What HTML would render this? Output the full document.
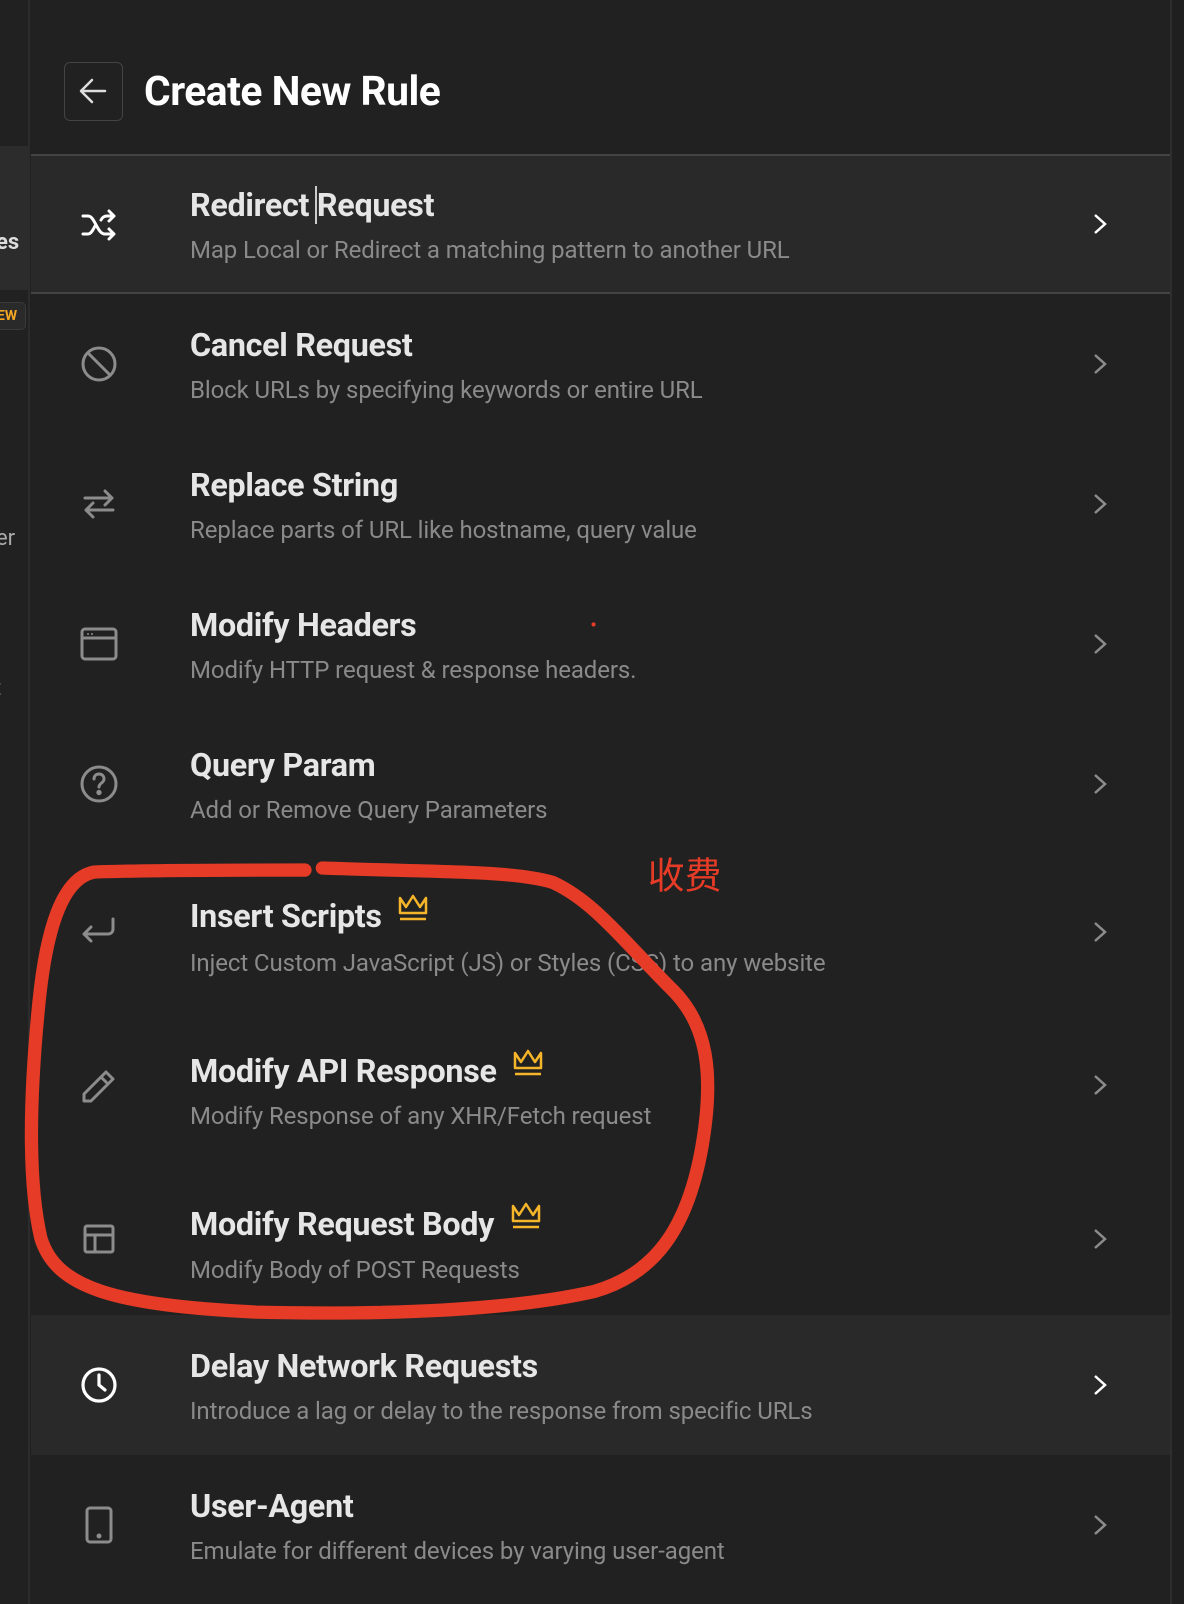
<!DOCTYPE html>
<html><head><meta charset="utf-8"><style>
*{margin:0;padding:0;box-sizing:border-box}
body{width:1184px;height:1604px;background:#212121;font-family:"Roboto","Liberation Sans","Noto Sans CJK SC",sans-serif;position:relative;overflow:hidden}
.side{position:absolute;left:0;top:0;width:30px;height:1604px;background:#212121;border-right:2px solid #2c2c2c}
.rstrip{position:absolute;left:1170px;top:0;width:14px;height:1604px;background:#1f1f1f;border-left:2px solid #2e2e2e}
.row{position:absolute;left:31px;width:1139px}
.row.hl{background:#292929}
.t{position:absolute;left:159px;font-size:32.3px;font-weight:bold;color:#e6e6e6;white-space:nowrap;letter-spacing:-0.3px}
.s{position:absolute;left:159px;font-size:24px;color:#8a8a8a;white-space:nowrap;letter-spacing:-0.1px}
.ic{position:absolute;left:48px;width:40px;height:40px}
.ch{position:absolute;left:1058px;width:24px;height:24px}
</style></head><body>
<div class="side">
 <div style="position:absolute;left:0;top:146px;width:28px;height:144px;background:#2c2c2c"></div>
 <div style="position:absolute;left:-4px;top:230px;font-size:22px;font-weight:bold;color:#ddd">es</div>
 <div style="position:absolute;left:-12px;top:302px;width:38px;height:28px;border:1px solid #3a3a3a;border-radius:5px;background:#2a2a2a;color:#f5a623;font-size:14px;font-weight:bold;line-height:26px;padding-left:8px">EW</div>
 <div style="position:absolute;left:-4px;top:526px;font-size:22px;color:#aaa">er</div>
 <div style="position:absolute;left:-6px;top:676px;font-size:22px;color:#999">t</div>
</div>
<div class="rstrip"></div>
<div style="position:absolute;left:64px;top:62px;width:59px;height:59px;border:1.5px solid #444;border-radius:6px">
<svg width="56" height="56" viewBox="0 0 56 56" style="position:absolute;left:0;top:0"><path d="M40 28H17M27 17L16 28l11 11" stroke="#ddd" stroke-width="2.5" fill="none" stroke-linecap="round" stroke-linejoin="round"/></svg></div>
<div style="position:absolute;left:144px;top:67px;font-size:40.8px;font-weight:bold;color:#fff;letter-spacing:-0.5px">Create New Rule</div>
<div style="position:absolute;left:31px;top:154px;width:1139px;height:2px;background:#444"></div>

<div class="row hl" style="top:156px;height:138px;border-bottom:2px solid #444">
 <svg class="ic" style="top:49px" viewBox="0 0 40 40" fill="none" stroke="#fff" stroke-width="3" stroke-linecap="round" stroke-linejoin="round"><path d="M4 11h5c7 0 9 18 17 18h8M4 29h5c3 0 5-4 7-8M22 15c1-2 3-4 6-4h6M30 6l5 5-5 5M30 24l5 5-5 5"/></svg>
 <div class="t" style="top:30px">Redirect <span style="border-left:2px solid #ccc;margin-left:-2px"></span>Request</div>
 <div class="s" style="top:80px">Map Local or Redirect a matching pattern to another URL</div>
 <svg class="ch" style="top:56px" viewBox="0 0 24 24" fill="none" stroke="#fff" stroke-width="2.5"><path d="M6 3l10 9-10 9"/></svg>
</div>

<div class="row" style="top:294px;height:140px">
 <svg class="ic" style="top:50px" viewBox="0 0 40 40" fill="none" stroke="#8c8c8c" stroke-width="3"><circle cx="20" cy="20" r="16"/><path d="M9 9l22 22"/></svg>
 <div class="t" style="top:32px">Cancel Request</div>
 <div class="s" style="top:82px">Block URLs by specifying keywords or entire URL</div>
 <svg class="ch" style="top:58px" viewBox="0 0 24 24" fill="none" stroke="#8c8c8c" stroke-width="2.5"><path d="M6 3l10 9-10 9"/></svg>
</div>

<div class="row" style="top:434px;height:140px">
 <svg class="ic" style="top:50px" viewBox="0 0 40 40" fill="none" stroke="#8c8c8c" stroke-width="3" stroke-linecap="round" stroke-linejoin="round"><path d="M6 14h27M26 7l7 7-7 7M34 26H7M14 19l-7 7 7 7"/></svg>
 <div class="t" style="top:32px">Replace String</div>
 <div class="s" style="top:82px">Replace parts of URL like hostname, query value</div>
 <svg class="ch" style="top:58px" viewBox="0 0 24 24" fill="none" stroke="#8c8c8c" stroke-width="2.5"><path d="M6 3l10 9-10 9"/></svg>
</div>

<div class="row" style="top:574px;height:140px">
 <svg class="ic" style="top:50px" viewBox="0 0 40 40" fill="none" stroke="#8c8c8c" stroke-width="3"><rect x="3" y="5" width="34" height="30" rx="3"/><path d="M3 14h34"/><circle cx="9" cy="10" r="1" fill="#8c8c8c" stroke="none"/><circle cx="13" cy="10" r="1" fill="#8c8c8c" stroke="none"/></svg>
 <div class="t" style="top:32px">Modify Headers</div>
 <div class="s" style="top:82px">Modify HTTP request &amp; response headers.</div>
 <svg class="ch" style="top:58px" viewBox="0 0 24 24" fill="none" stroke="#8c8c8c" stroke-width="2.5"><path d="M6 3l10 9-10 9"/></svg>
</div>

<div class="row" style="top:714px;height:141px">
 <svg class="ic" style="top:50px" viewBox="0 0 40 40" fill="none" stroke="#8c8c8c" stroke-width="3" stroke-linecap="round"><circle cx="20" cy="20" r="17"/><path d="M15 15c0-3 2-5 5-5s5 2 5 5c0 4-5 4-5 8"/><circle cx="20" cy="28.5" r="1.2" fill="#8c8c8c"/></svg>
 <div class="t" style="top:32px">Query Param</div>
 <div class="s" style="top:82px">Add or Remove Query Parameters</div>
 <svg class="ch" style="top:58px" viewBox="0 0 24 24" fill="none" stroke="#8c8c8c" stroke-width="2.5"><path d="M6 3l10 9-10 9"/></svg>
</div>

<div class="row" style="top:855px;height:153px">
 <svg class="ic" style="top:56px" viewBox="0 0 40 40" fill="none" stroke="#8c8c8c" stroke-width="3" stroke-linecap="round" stroke-linejoin="round"><path d="M34 8v10c0 3-2 5-5 5H5M12 16l-7 7 7 7"/></svg>
 <div class="t" style="top:38px">Insert Scripts <svg width="32" height="30" viewBox="0 0 32 30" style="vertical-align:4px;margin-left:8px" fill="none" stroke="#f5b52a" stroke-width="2.5" stroke-linejoin="round"><path d="M3 5l6 9 7-11 7 11 6-9v15H3z"/><path d="M3 26h26"/></svg></div>
 <div class="s" style="top:94px">Inject Custom JavaScript (JS) or Styles (CSS) to any website</div>
 <svg class="ch" style="top:65px" viewBox="0 0 24 24" fill="none" stroke="#8c8c8c" stroke-width="2.5"><path d="M6 3l10 9-10 9"/></svg>
</div>

<div class="row" style="top:1008px;height:154px">
 <svg class="ic" style="top:58px" viewBox="0 0 40 40" fill="none" stroke="#8c8c8c" stroke-width="3" stroke-linejoin="round"><path d="M5 35v-7L27 6l7 7-22 22z M22 11l7 7"/></svg>
 <div class="t" style="top:40px">Modify API Response <svg width="32" height="30" viewBox="0 0 32 30" style="vertical-align:4px;margin-left:8px" fill="none" stroke="#f5b52a" stroke-width="2.5" stroke-linejoin="round"><path d="M3 5l6 9 7-11 7 11 6-9v15H3z"/><path d="M3 26h26"/></svg></div>
 <div class="s" style="top:94px">Modify Response of any XHR/Fetch request</div>
 <svg class="ch" style="top:65px" viewBox="0 0 24 24" fill="none" stroke="#8c8c8c" stroke-width="2.5"><path d="M6 3l10 9-10 9"/></svg>
</div>

<div class="row" style="top:1162px;height:153px">
 <svg class="ic" style="top:57px" viewBox="0 0 40 40" fill="none" stroke="#8c8c8c" stroke-width="3"><rect x="6" y="7" width="28" height="26" rx="2"/><path d="M6 16h28M16 16v17"/></svg>
 <div class="t" style="top:39px">Modify Request Body <svg width="32" height="30" viewBox="0 0 32 30" style="vertical-align:4px;margin-left:8px" fill="none" stroke="#f5b52a" stroke-width="2.5" stroke-linejoin="round"><path d="M3 5l6 9 7-11 7 11 6-9v15H3z"/><path d="M3 26h26"/></svg></div>
 <div class="s" style="top:94px">Modify Body of POST Requests</div>
 <svg class="ch" style="top:65px" viewBox="0 0 24 24" fill="none" stroke="#8c8c8c" stroke-width="2.5"><path d="M6 3l10 9-10 9"/></svg>
</div>

<div class="row hl" style="top:1315px;height:140px">
 <svg class="ic" style="top:50px" viewBox="0 0 40 40" fill="none" stroke="#fff" stroke-width="3.2" stroke-linecap="round"><circle cx="20" cy="20" r="16"/><path d="M20 10v10l6 5"/></svg>
 <div class="t" style="top:32px">Delay Network Requests</div>
 <div class="s" style="top:82px">Introduce a lag or delay to the response from specific URLs</div>
 <svg class="ch" style="top:58px" viewBox="0 0 24 24" fill="none" stroke="#fff" stroke-width="2.5"><path d="M6 3l10 9-10 9"/></svg>
</div>

<div class="row" style="top:1455px;height:149px">
 <svg class="ic" style="top:50px" viewBox="0 0 40 40" fill="none" stroke="#8c8c8c" stroke-width="3"><rect x="8" y="3" width="24" height="34" rx="3"/><circle cx="20" cy="31" r="1" fill="#8c8c8c"/></svg>
 <div class="t" style="top:32px">User-Agent</div>
 <div class="s" style="top:82px">Emulate for different devices by varying user-agent</div>
 <svg class="ch" style="top:58px" viewBox="0 0 24 24" fill="none" stroke="#8c8c8c" stroke-width="2.5"><path d="M6 3l10 9-10 9"/></svg>
</div>

<svg width="1184" height="1604" viewBox="0 0 1157 1567" style="position:absolute;left:0;top:0;pointer-events:none" fill="none">
<path d="M298 850C230 850 140 850 92 852C60 858 45 910 38 980C30 1060 26 1150 40 1210C55 1258 110 1275 250 1282C380 1285 500 1280 580 1262C640 1245 672 1200 686 1120C698 1050 692 1000 655 965C610 920 580 880 540 862C500 850 420 852 315 848" stroke="#e63b26" stroke-width="13" stroke-linecap="round"/>
<circle cx="580" cy="610" r="2" fill="#e63b26"/>
<text x="633" y="868" font-size="36" fill="#e63b26" font-family="Noto Sans CJK SC, sans-serif">收费</text>
</svg>
</body></html>
